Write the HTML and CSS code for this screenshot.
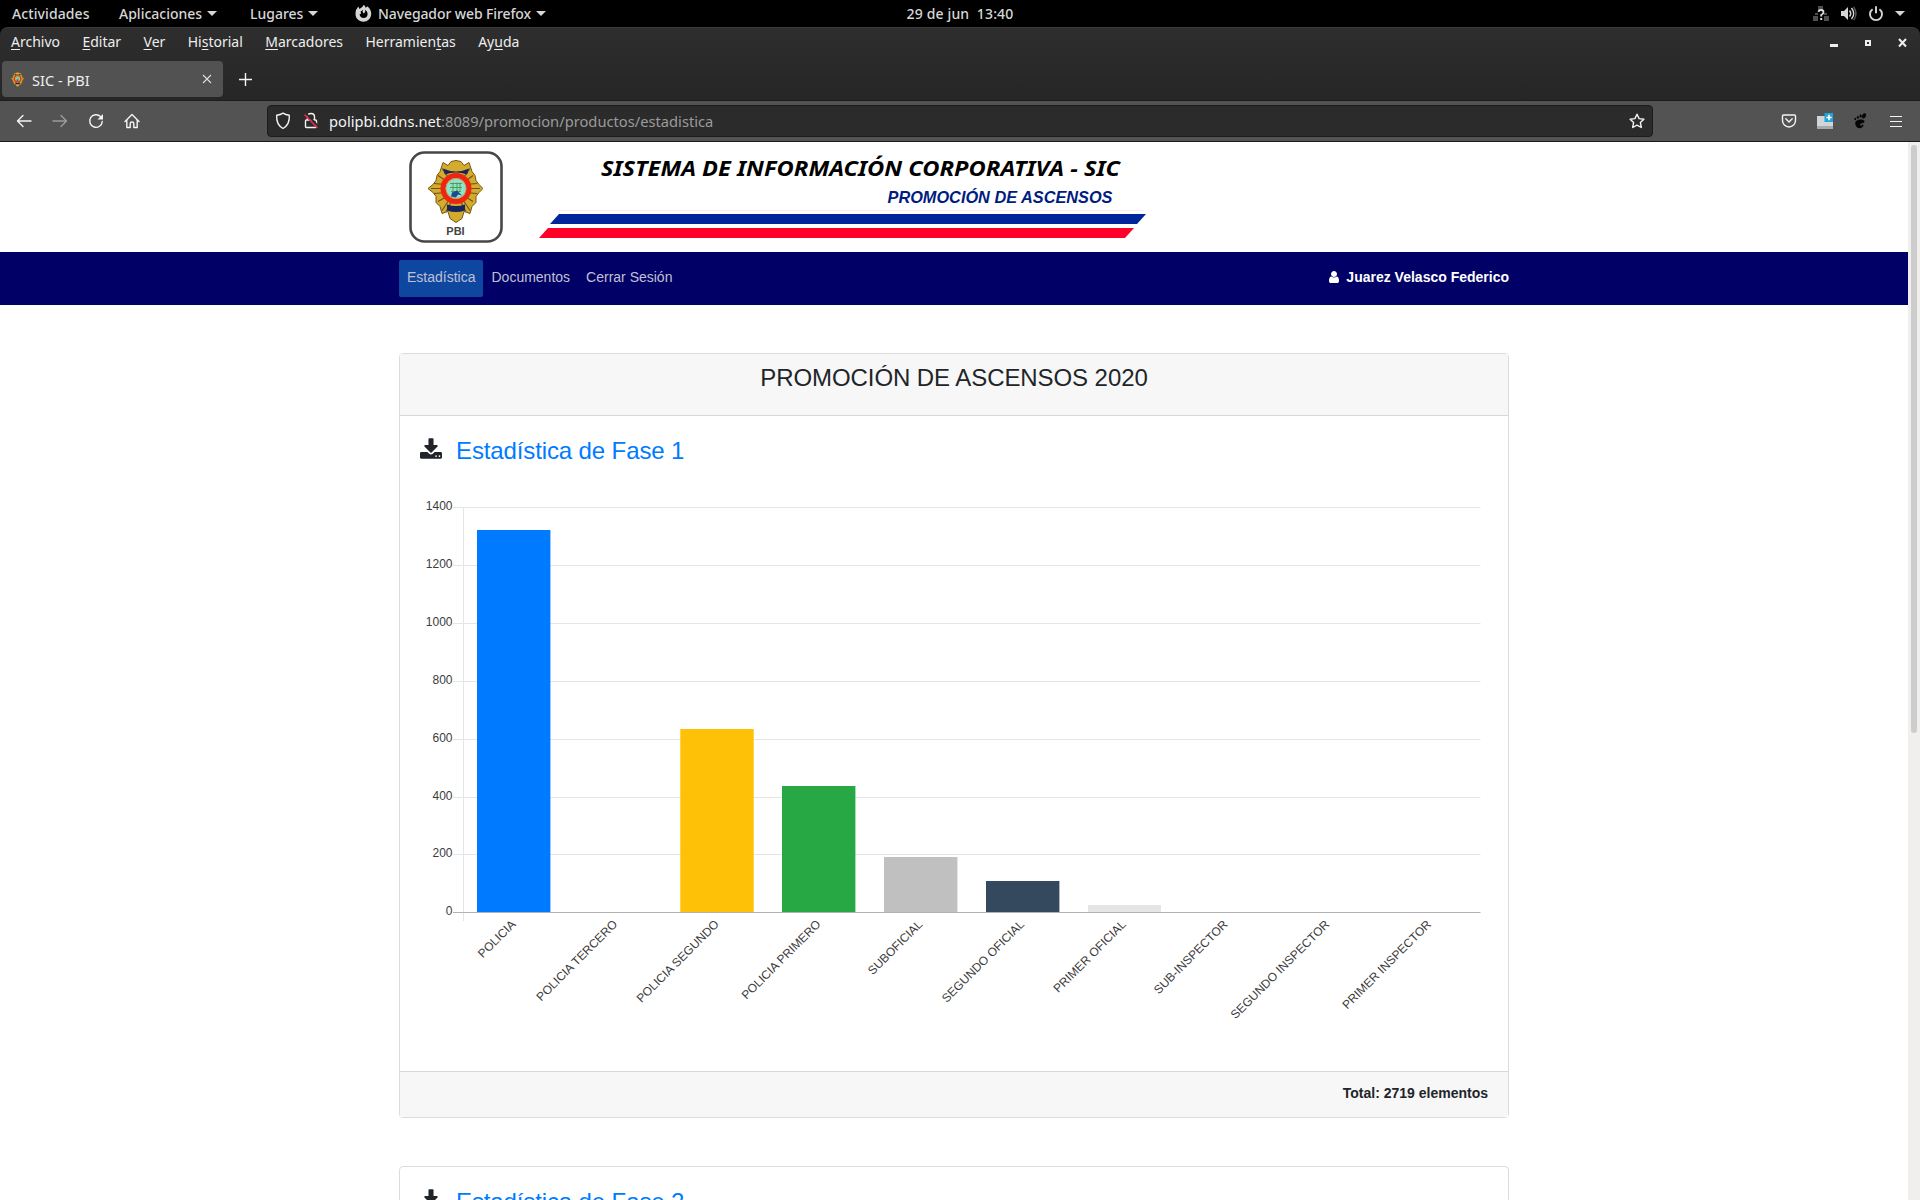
FILE: index.html
```html
<!DOCTYPE html>
<html lang="es">
<head>
<meta charset="utf-8">
<title>SIC - PBI</title>
<link rel="stylesheet" href="styles.css">
</head>
<body>
<svg class="defs" width="0" height="0">
  <symbol id="badge" viewBox="0 0 55 62">
    <path d="M12 11 15 2 20 5 23 1 28 0 33 1 36 5 41 2 44 11 47 15 48 20 51 24 55 28 51 32 48 36 48 42 44 46 42 53 36 51 34 58 28 62 22 58 20 51 14 53 12 46 8 42 8 36 5 32 0 28 5 24 8 20 9 15z" fill="#d3ab2e" stroke="#76560e"/>
    <path d="M14 8 21 18M42 8 35 18M3 28H17M52 28H38M14 50 22 38M42 50 34 38M6 33 19 32M49 33 36 32M6 23 18 24M49 23 37 24M18 51 24 40M38 51 32 40M10 15 19 21M45 15 37 21M10 41 19 36M45 41 37 36" stroke="#6b5316" stroke-width="1.1"/>
    <path d="M15 8Q28 14 41 8L39 14Q28 10 17 14zM19 44Q28 47 37 44V50Q28 53 19 50z" fill="#18245c"/>
    <circle cx="28" cy="28" r="13" fill="none" stroke="#f02413" stroke-width="5"/>
    <circle cx="28" cy="28" r="10" fill="#8be4cf" stroke="#c5a36b"/>
    <path d="M22 23H34M22 27H34M23 31H33M25 22V32M29 22V32M32 22V31" stroke="#5b9a4a"/>
    <path d="M24 32 29 30 34 35 30 34 28 37 23 36z" fill="#1b4e8e"/>
  </symbol>
  <symbol id="download" viewBox="64 0 1664 1536">
    <path d="M1344 1344q0-26-19-45t-45-19-45 19-19 45 19 45 45 19 45-19 19-45zm256 0q0-26-19-45t-45-19-45 19-19 45 19 45 45 19 45-19 19-45zm128-224v320q0 40-28 68t-68 28h-1472q-40 0-68-28t-28-68v-320q0-40 28-68t68-28h465l135 136q58 56 136 56t136-56l136-136h464q40 0 68 28t28 68zm-325-569q17 41-14 70l-448 448q-18 19-45 19t-45-19l-448-448q-31-29-14-70 17-39 59-39h256v-448q0-26 19-45t45-19h256q26 0 45 19t19 45v448h256q42 0 59 39z"/>
  </symbol>
</svg>

<div class="topbar">
  <div class="top-left">
    <span class="t-act">Actividades</span>
    <span class="t-app">Aplicaciones <i class="caret"></i></span>
    <span class="t-lug">Lugares <i class="caret"></i></span>
    <span class="t-nav"><svg width="17" height="17" viewBox="0 0 17 17"><path fill="#d6d6d6" fill-rule="evenodd" d="M1 5 3.300 1.500 4.500 4 7.500 1.800 8.500 0C10 .7 10.500 2 10.500 2.800 11.500 2.500 11.800 1.800 12 1.300 15 3 16.500 6 16.200 9.500 15.700 14 12.300 16.700 8.500 16.700 3.500 16.700.5 13 .5 9 .5 7.500.7 6 1 5zM8.300 4.800 5.600 6.500 6 9C5 9 4.600 9 4.600 9.500 5 12 6.700 13 8.600 13 11 13 12.500 11.500 12.600 9 12.600 6.800 11.200 5.500 9.800 4.800L10.300 7 8.500 8.500 7.500 6.500z"/></svg>Navegador web Firefox <i class="caret"></i></span>
  </div>
  <div class="clock">29 de jun&nbsp; 13:40</div>
  <div class="top-right">
    <svg width="16" height="16" viewBox="0 0 16 16"><path d="M5 0h5v4H5zM0 10h5v5H0zM11 10h5v5h-5zM2 7h3v2H2zM11 7h3v2h-3z" fill="#4e4e4e"/><path d="M5.500 5.800Q5.800 4 8 4q2.500 0 2.500 2.200Q10.500 7.500 8.200 9v1.500" fill="none" stroke="#ddd" stroke-width="1.800"/><path d="M7.200 12h2v2h-2z" fill="#ddd"/></svg>
    <svg width="16" height="16" viewBox="0 0 16 16"><path d="M0 5h3l4-4v13l-4-4H0z" fill="#d6d6d6"/><path d="M8.500 4.500q2.500 3 0 6M10.500 2q4.500 5.500 0 11" fill="none" stroke="#d6d6d6" stroke-width="1.500"/><path d="M12.700.8q4.500 6.700 0 13.400" fill="none" stroke="#555" stroke-width="1.500"/></svg>
    <svg width="16" height="16" viewBox="0 0 16 16"><path d="M4.600 3.200a6 6 0 1 0 6.800 0M8 .3v7" fill="none" stroke="#d6d6d6" stroke-width="1.900"/></svg>
    <i class="caret"></i>
  </div>
</div>

<div class="titlebar">
  <div class="menubar">
    <div class="menus"><span><u>A</u>rchivo</span><span><u>E</u>ditar</span><span><u>V</u>er</span><span>Hi<u>s</u>torial</span><span><u>M</u>arcadores</span><span>Herramien<u>t</u>as</span><span>Ay<u>u</u>da</span></div>
    <svg width="78" height="12" viewBox="0 0 78 12"><path d="M1 7h8v3H1z" fill="#eee"/><path d="M37 4h4v4h-4z" fill="none" stroke="#eee" stroke-width="2"/><path d="M70 2l7 7.500M77 2l-7 7.500" stroke="#eee" stroke-width="2"/></svg>
  </div>
  <div class="tabs">
    <div class="tab">
      <svg width="13" height="15"><use href="#badge"/></svg>
      <span>SIC - PBI</span>
      <svg width="10" height="10" viewBox="0 0 10 10"><path d="M1 1l8 8M9 1L1 9" stroke="#ddd" stroke-width="1.100"/></svg>
    </div>
    <svg width="13" height="13" viewBox="0 0 13 13"><path d="M6.500 0v13M0 6.500h13" stroke="#f4f4f4" stroke-width="1.400"/></svg>
  </div>
</div>

<div class="toolbar">
  <div class="nav-icons">
    <svg width="16" height="16" viewBox="0 0 16 16"><path d="M15 8H1.800M7 2.500 1.500 8 7 13.500" class="ln"/></svg>
    <svg width="16" height="16" viewBox="0 0 16 16" opacity=".45"><path d="M1 8h13.200M9 2.500 14.500 8 9 13.500" class="ln"/></svg>
    <svg width="16" height="16" viewBox="0 0 16 16"><path d="M14.300 8.500A6.300 6.300 0 1 1 12.500 3.600" class="ln"/><path d="M15 1v5.500H9.500z" fill="#f4f4f4"/></svg>
    <svg width="16" height="16" viewBox="0 0 16 16"><path d="M1 8.500 8 1.500l7 7M2.800 7v7.500h3.400v-4q0-1.500 1.800-1.500t1.800 1.500v4h3.400V7" class="ln"/></svg>
  </div>
  <div class="urlbar">
    <svg width="16" height="18" viewBox="0 0 16 18"><path d="M8 1.200C10 2.500 12 3 14.300 3.300 14.700 9 13.500 13.500 8 16.500 2.500 13.500 1.300 9 1.700 3.300 4 3 6 2.500 8 1.200z" class="ln"/></svg>
    <svg width="16" height="18" viewBox="0 0 16 18"><path d="M4.500 7V5q0-3.500 3.500-3.500T11.500 5v2M3.500 8h9q1 0 1 1v5.500q0 1-1 1h-9q-1 0-1-1V9q0-1 1-1z" class="ln"/><path d="M2.500 1 15.500 14.500" stroke="#2b2b2b" stroke-width="2"/><path d="M1.500 2.500 14.500 16" stroke="#e22850" stroke-width="1.700"/></svg>
    <span class="url"><b>polipbi.ddns.net</b>:8089/promocion/productos/estadistica</span>
    <svg width="16" height="16" viewBox="0 0 16 16"><path d="M8 1.200 10.100 5.600 14.900 6.200 11.400 9.600 12.300 14.500 8 12.100 3.700 14.500 4.600 9.600 1.100 6.200 5.900 5.600z" class="ln"/></svg>
  </div>
  <div class="tool-right">
    <svg width="16" height="16" viewBox="0 0 16 16"><path d="M2.500 2h11q1 0 1 1v4.500a6.500 6.500 0 0 1-13 0V3q0-1 1-1zM4.800 5.800 8 9l3.200-3.200" class="ln"/></svg>
    <svg width="16" height="16" viewBox="0 0 16 16"><path d="M0 3h16v11H0z" fill="#d2d5d8"/><path d="M0 13h16v3H0z" fill="#a6a9ad"/><path d="M7.500 0H16v9H7.500z" fill="#21a3dc"/><path d="M12 1.800v5.400M9.300 4.500h5.400" stroke="#fff" stroke-width="1.700"/></svg>
    <svg width="14" height="16" viewBox="0 0 14 16"><g fill="#060606"><ellipse cx="11" cy="2.800" rx="1.900" ry="2.700" transform="rotate(25 11 2.800)"/><ellipse cx="7.600" cy="3" rx="1.100" ry="1.700"/><ellipse cx="4.800" cy="4.200" rx="1" ry="1.500"/><ellipse cx="2.300" cy="6" rx=".9" ry="1.300"/><path d="M11.500 8.200C11 5.600 2 6 2.200 10.500 2.400 14.500 6 16 8.500 14.800 10.500 13.800 11 11.500 10 11.500 9 11.500 9 13 7.700 12.600 6.500 12 7 10.600 9 10.300 10.500 10 11.700 9.300 11.500 8.200z"/></g></svg>
    <svg width="14" height="16" viewBox="0 0 14 16"><path d="M1 3.500h12M1 8.500h12M1 13.500h12" class="thin"/></svg>
  </div>
</div>

<div class="viewport">
  <div class="page">
    <header class="banner">
      <svg width="760" height="110" viewBox="0 0 760 110">
        <rect x="11.500" y="10.500" width="91" height="89" rx="14" fill="#fff" stroke="#474747" stroke-width="2.600"/>
        <use href="#badge" x="29" y="18" width="55" height="63"/>
        <text x="56.500" y="93" text-anchor="middle" class="b-pbi">PBI</text>
        <text x="202" y="33.500" textLength="519" lengthAdjust="spacingAndGlyphs" class="b-title">SISTEMA DE INFORMACIÓN CORPORATIVA - SIC</text>
        <text x="488.500" y="60.500" textLength="225" lengthAdjust="spacingAndGlyphs" class="b-sub">PROMOCIÓN DE ASCENSOS</text>
        <path d="M160 68.500H745" stroke="#f6edf1"/>
        <path d="M160 72H747L738 82H151z" fill="#002699"/>
        <path d="M149 86H735L726 96H140z" fill="#ff0029"/>
      </svg>
    </header>
    <nav class="navbar">
      <div class="container">
        <a class="active">Estadística</a><a>Documentos</a><a>Cerrar Sesión</a>
        <span class="user"><svg width="10" height="12" viewBox="256 128 1280 1536"><path fill="#fff" d="M1536 1399q0 109-62.500 187t-150.500 78h-854q-88 0-150.500-78t-62.500-187q0-85 8.500-160.500t31.500-152 58.500-131 94-89 134.500-34.500q131 128 313 128t313-128q76 0 134.500 34.500t94 89 58.500 131 31.500 152 8.500 160.500zm-256-887q0 159-112.500 271.500t-271.500 112.500-271.500-112.500-112.500-271.500 112.500-271.500 271.500-112.500 271.500 112.500 112.500 271.500z"/></svg>Juarez Velasco Federico</span>
      </div>
    </nav>
    <main>
      <section class="card">
        <div class="card-head">PROMOCIÓN DE ASCENSOS 2020</div>
        <div class="card-body">
          <h4><svg width="22" height="21"><use href="#download"/></svg><a>Estadística de Fase 1</a></h4>
          <svg class="chart" width="1068" height="560" viewBox="420 490 1068 560">
            <path d="M453 507.500H1480.500M453 565.500H1480.500M453 623.500H1480.500M453 681.500H1480.500M453 739.500H1480.500M453 797.500H1480.500M453 854.500H1480.500M463.500 507V921" stroke="#e5e5e5"/>
            <g>
              <path d="M477 530h73.400v382H477z" fill="#007bff"/>
              <path d="M680.300 729h73.400v183h-73.400z" fill="#ffc107"/>
              <path d="M782 786h73.400v126H782z" fill="#28a745"/>
              <path d="M884 857h73.400v55H884z" fill="#c0c0c0"/>
              <path d="M986 881h73.400v31H986z" fill="#34495e"/>
              <path d="M1088 905h73v7h-73z" fill="#e5e5e5"/>
            </g>
            <path d="M453 912.500H1480.500" stroke="#b2b2b2"/>
            <g text-anchor="end">
              <text x="452.500" y="510">1400</text><text x="452.500" y="568">1200</text><text x="452.500" y="626">1000</text><text x="452.500" y="684">800</text><text x="452.500" y="742">600</text><text x="452.500" y="800">400</text><text x="452.500" y="857">200</text><text x="452.500" y="915">0</text>
              <text transform="translate(516.300 925) rotate(-45)">POLICIA</text>
              <text transform="translate(618 925) rotate(-45)">POLICIA TERCERO</text>
              <text transform="translate(719.700 925) rotate(-45)">POLICIA SEGUNDO</text>
              <text transform="translate(821.400 925) rotate(-45)">POLICIA PRIMERO</text>
              <text transform="translate(923.200 925) rotate(-45)">SUBOFICIAL</text>
              <text transform="translate(1024.900 925) rotate(-45)">SEGUNDO OFICIAL</text>
              <text transform="translate(1126.700 925) rotate(-45)">PRIMER OFICIAL</text>
              <text transform="translate(1228.400 925) rotate(-45)">SUB-INSPECTOR</text>
              <text transform="translate(1330.200 925) rotate(-45)">SEGUNDO INSPECTOR</text>
              <text transform="translate(1431.900 925) rotate(-45)">PRIMER INSPECTOR</text>
            </g>
          </svg>
        </div>
        <div class="card-foot">Total: 2719 elementos</div>
      </section>
      <section class="card">
        <div class="card-body"><h4><svg width="22" height="21"><use href="#download"/></svg><a>Estadística de Fase 2</a></h4></div>
      </section>
    </main>
  </div>
  <div class="scroll"><div class="thumb"></div></div>
</div>
</body>
</html>
```

FILE: styles.css
```css
* { box-sizing: border-box; }
html, body { margin: 0; height: 1200px; overflow: hidden; }
body {
  display: flex;
  flex-direction: column;
  background: #000;
  font-family: "Liberation Sans", Arial, sans-serif;
  color: #212529;
}
svg { flex: none; display: block; }
.defs { display: none; }
.ln { fill: none; stroke: #f4f4f4; stroke-width: 1.4; stroke-linejoin: round; stroke-linecap: round; }
.thin { stroke: #f4f4f4; stroke-width: 1.1; }

/* desktop panel */
.topbar {
  height: 27px;
  flex: none;
  display: grid;
  grid-template-columns: 1fr 110px 1fr;
  align-items: center;
  background: #000;
  color: #d6d6d6;
  font: 500 14px/27px "Noto Sans", sans-serif;
  white-space: nowrap;
}
.top-left, .top-right { display: flex; align-items: center; }
.top-left span { display: flex; align-items: center; gap: 5px; }
.t-act { width: 119px; padding-left: 12px; letter-spacing: .1px; }
.t-app { width: 131px; }
.t-lug { width: 105px; }
.t-nav { letter-spacing: -.1px; }
.t-nav svg { margin-right: 1px; }
.clock { text-align: center; letter-spacing: .15px; }
.top-right { justify-content: flex-end; padding-right: 15px; gap: 11px; }
.top-right svg:first-child { margin-right: 1px; }
.caret { border: 5px solid transparent; border-top-color: #d6d6d6; border-bottom: 0; }

/* browser window */
.titlebar {
  height: 73px;
  flex: none;
  background: linear-gradient(#2e2e2e, #262626);
  border-top: 1px solid #3a3a3a;
  border-radius: 8px 8px 0 0;
  color: #eee;
  font: 14px/30px "Noto Sans", sans-serif;
}
.menubar { height: 33px; display: flex; justify-content: space-between; padding: 0 13px 0 11px; }
.menubar svg { margin-top: 9px; }
.menus { display: flex; gap: 22.4px; height: 29px; line-height: 28px; }
.menus u { text-underline-offset: 2px; }
.tabs { display: flex; align-items: center; gap: 16px; padding-left: 2px; height: 36px; }
.tab {
  width: 221px;
  height: 36px;
  display: flex;
  align-items: center;
  gap: 8px;
  padding: 0 11px 0 9px;
  border-radius: 4px;
  background: #525252;
}
.tab span { flex: 1; font-size: 14.6px; padding-top: 1px; }
.toolbar {
  height: 42px;
  flex: none;
  display: flex;
  align-items: center;
  background: #535353;
  border-top: 1px solid #1d1d1d;
  border-bottom: 1px solid #1a1a1a;
  font: 14.7px/29px "Noto Sans", sans-serif;
}
.nav-icons { width: 267px; display: flex; gap: 20px; padding-left: 16px; }
.urlbar {
  width: 1386px;
  height: 32px;
  display: flex;
  align-items: center;
  padding: 0 7px;
  gap: 12px;
  background: #2b2b2b;
  border: 1px solid #1c1c1c;
  border-radius: 4px;
}
.url { flex: 1; color: #9b9b9b; margin-left: -2px; padding-top: 1px; }
.url b { color: #f4f4f4; font-weight: 400; }
.tool-right { flex: 1; display: flex; justify-content: flex-end; gap: 20px; padding-right: 17px; }
.tool-right svg:nth-child(3) { margin-right: 2px; }

/* page */
.viewport { flex: 1; display: flex; background: #fff; overflow: hidden; }
.page { width: 1908px; overflow: hidden; }
.scroll { width: 12px; background: #f0efee; padding: 3px; }
.thumb { height: 588px; border-radius: 3px; background: #ccc; }
.banner { height: 110px; padding-left: 399px; }
.b-pbi { font: bold 11px "Liberation Sans", sans-serif; fill: #444; }
.b-title { font: italic bold 22px "Noto Sans", sans-serif; fill: #000; }
.b-sub { font: italic bold 16.5px "Liberation Sans", sans-serif; fill: #001c80; }
.navbar { height: 53px; background: #006; padding: 8px 399px; }
.container { display: flex; font-size: 14px; line-height: 17px; color: #c0c0d4; }
.container a { height: 37px; padding: 9px 8px; border-radius: 2px; }
.container .active { background: #0e479f; }
.user { margin-left: auto; padding-top: 9px; display: flex; gap: 7px; font-weight: bold; color: #fff; }
.user svg { margin-top: 2px; }
main { padding: 48px 399px 0; display: flex; flex-direction: column; gap: 48px; }
.card { border: 1px solid #dcdcdc; border-radius: 4px; flex: none; }
.card-head {
  height: 62px;
  padding-top: 9px;
  background: #f7f7f7;
  border-bottom: 1px solid #d8d8d8;
  text-align: center;
  font-size: 24px;
  line-height: 29px;
  letter-spacing: -.08px;
}
.card-body { padding: 20px 20px 0; height: 655px; }
h4 { display: flex; gap: 14px; margin: 0; font-weight: 400; font-size: 24px; line-height: 29px; height: 54px; }
h4 svg { fill: #212529; margin-top: 2px; }
h4 a { color: #007bff; letter-spacing: -.12px; }
.card-foot {
  height: 46px;
  padding: 13px 20px;
  background: #f7f7f7;
  border-top: 1px solid #d8d8d8;
  text-align: right;
  font-weight: bold;
  font-size: 14px;
  line-height: 17px;
}
.chart { font: 12px "Liberation Sans", sans-serif; fill: #3c3c3c; }
```
